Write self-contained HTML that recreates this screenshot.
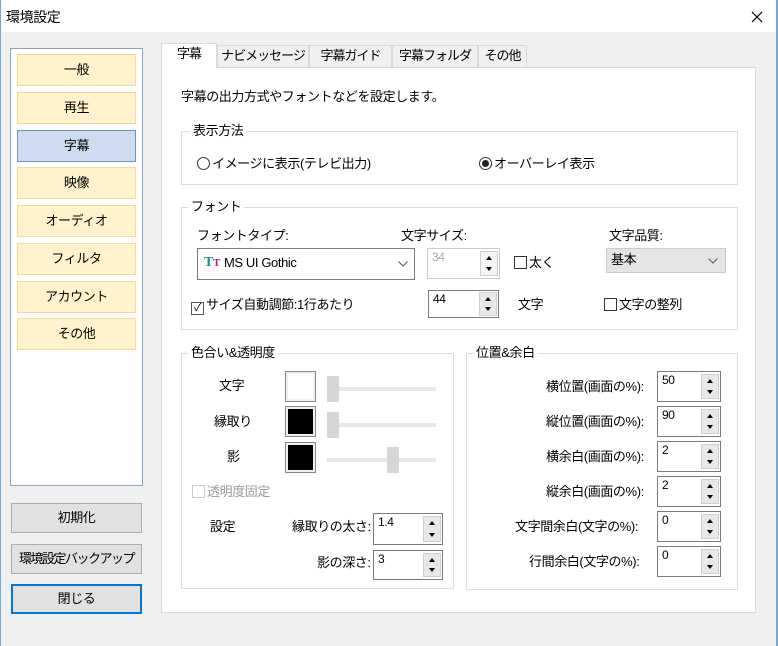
<!DOCTYPE html>
<html><head><meta charset="utf-8">
<style>
*{box-sizing:border-box;margin:0;padding:0}
body{width:778px;height:646px;background:#f0f0f0;font-family:"Liberation Sans","Noto Sans CJK JP",sans-serif;font-size:13px;color:#000;position:relative;overflow:hidden;letter-spacing:-0.4px}
.a{position:absolute}
.t{position:absolute;white-space:nowrap;line-height:16px}
.nav{position:absolute;left:17px;width:119px;height:32px;background:#fff2cc;border:1px solid #f3d99b;text-align:center;line-height:30px;white-space:nowrap}
.btn{position:absolute;left:11px;width:131px;height:30px;background:#e1e1e1;border:1px solid #adadad;text-align:center;line-height:28px;white-space:nowrap;overflow:hidden}
.tab{position:absolute;top:45px;height:22px;border:1px solid #d9d9d9;border-bottom:none;background:#f0f0f0;text-align:center;line-height:20px;white-space:nowrap;overflow:hidden;letter-spacing:-1px}
.grp{position:absolute;border:1px solid #dcdcdc}
.gl{position:absolute;top:-9px;left:8px;background:#fff;padding:0 3px;line-height:16px;white-space:nowrap}
.spin{position:absolute;background:#fff;border:1px solid #7a7a7a}
.spin .v{position:absolute;left:4px;top:1px;line-height:14px;font-size:12px}
.sb{position:absolute;right:1px;width:18px;background:#e8e8e8;border:1px solid #cfcfcf}
.sb:before{content:"";position:absolute;left:5px;top:4px;border:3px solid transparent;border-bottom:4px solid #000;border-top:0}
.sb:after{content:"";position:absolute;left:5px;bottom:4px;border:3px solid transparent;border-top:4px solid #000;border-bottom:0}
.sw{position:absolute;left:285px;width:31px;height:31px;border:1px solid #888;box-shadow:inset 0 0 0 2px #f0f0f0}
.trk{position:absolute;left:327px;width:109px;height:4px;background:#e7e7e7}
.thumb{position:absolute;width:12px;height:26px;background:#d6d6d6}
.cb{display:inline-block;width:13px;height:13px;border:1px solid #333;vertical-align:-2px;margin-right:2px;background:#fff;font-size:11px;line-height:11px;text-align:center}
.rd{display:inline-block;width:13px;height:13px;border:1px solid #333;border-radius:50%;vertical-align:-2px;margin-right:2px;background:#fff;position:relative}
.rd i{position:absolute;left:2px;top:2px;width:7px;height:7px;border-radius:50%;background:#222}
</style></head><body>
<div class="a" style="left:0;top:0;width:778px;height:32px;background:#fff"></div>
<div class="a" style="left:0;top:0;width:1px;height:646px;background:#6fa9dc"></div>
<div class="a" style="right:0;top:0;width:2px;height:646px;background:#6fa9dc"></div>
<div class="t" style="left:6px;top:9px;font-size:14px">環境設定</div>
<svg class="a" style="left:751px;top:11px" width="12" height="12"><path d="M1 1L11 11M11 1L1 11" stroke="#000" stroke-width="1.2"/></svg>

<div class="a" style="left:10px;top:48px;width:133px;height:438px;background:#fff;border:1px solid #8aa4c8"></div>
<div class="nav" style="top:54px">一般</div>
<div class="nav" style="top:92px">再生</div>
<div class="nav" style="top:130px;background:#cddcf0;border:1px solid #6f94cc">字幕</div>
<div class="nav" style="top:167px">映像</div>
<div class="nav" style="top:205px">オーディオ</div>
<div class="nav" style="top:243px">フィルタ</div>
<div class="nav" style="top:281px">アカウント</div>
<div class="nav" style="top:318px">その他</div>

<div class="btn" style="top:503px">初期化</div>
<div class="btn" style="top:544px;letter-spacing:-1.5px">環境設定バックアップ</div>
<div class="btn" style="top:584px;border:2px solid #0078d7;line-height:26px">閉じる</div>

<div class="a" style="left:161px;top:67px;width:595px;height:546px;background:#fff;border:1px solid #d9d9d9"></div>
<div class="tab" style="left:217px;width:92px">ナビメッセージ</div>
<div class="tab" style="left:309px;width:83px">字幕ガイド</div>
<div class="tab" style="left:392px;width:86px">字幕フォルダ</div>
<div class="tab" style="left:478px;width:49px">その他</div>
<div class="tab" style="left:161px;top:43px;width:56px;height:25px;background:#fff">字幕</div>

<div class="t" style="left:181px;top:89px">字幕の出力方式やフォントなどを設定します。</div>

<div class="grp" style="left:181px;top:131px;width:557px;height:54px"><div class="gl">表示方法</div></div>
<div class="t" style="left:197px;top:156px"><span class="rd"></span>イメージに表示(テレビ出力)</div>
<div class="t" style="left:479px;top:156px"><span class="rd"><i></i></span>オーバーレイ表示</div>

<div class="grp" style="left:181px;top:207px;width:557px;height:123px"><div class="gl" style="left:6px">フォント</div></div>
<div class="t" style="left:197px;top:228px">フォントタイプ:</div>
<div class="t" style="left:401px;top:228px">文字サイズ:</div>
<div class="t" style="left:609px;top:228px">文字品質:</div>
<div class="a" style="left:197px;top:248px;width:218px;height:32px;background:#fff;border:1px solid #7a7a7a"></div>
<div class="t" style="left:204px;top:255px;font-family:'Liberation Serif',serif;font-weight:bold;color:#1b8a8a;font-size:14px">T<span style="color:#a0228c;font-size:11px">T</span></div>
<div class="t" style="left:224px;top:255px">MS UI Gothic</div>
<svg class="a" style="left:398px;top:261px" width="10" height="6"><path d="M0.5 0.5L5 5L9.5 0.5" stroke="#555" fill="none"/></svg>
<div class="spin" style="left:427px;top:248px;width:73px;height:31px;border-color:#ccc"><div class="v" style="color:#aaa">34</div><div class="sb" style="top:2px;height:25px;background:#f4f4f4"></div></div>
<div class="t" style="left:514px;top:255px"><span class="cb"></span>太く</div>
<div class="a" style="left:606px;top:248px;width:120px;height:25px;background:#e5e5e5;border:1px solid #ccc"></div>
<div class="t" style="left:611px;top:252px">基本</div>
<svg class="a" style="left:708px;top:258px" width="10" height="6"><path d="M0.5 0.5L5 5L9.5 0.5" stroke="#555" fill="none"/></svg>
<div class="t" style="left:191px;top:297px"><span class="cb" style="border-color:#555">✓</span>サイズ自動調節:1行あたり</div>
<div class="spin" style="left:428px;top:290px;width:71px;height:28px"><div class="v">44</div><div class="sb" style="top:1px;height:24px"></div></div>
<div class="t" style="left:518px;top:297px">文字</div>
<div class="t" style="left:604px;top:297px"><span class="cb"></span>文字の整列</div>

<div class="grp" style="left:181px;top:353px;width:273px;height:236px"><div class="gl" style="left:6px">色合い&amp;透明度</div></div>
<div class="t" style="left:219px;top:378px">文字</div>
<div class="t" style="left:214px;top:414px">縁取り</div>
<div class="t" style="left:227px;top:449px">影</div>
<div class="sw" style="top:371px;background:#fff"></div>
<div class="sw" style="top:406px;background:#000"></div>
<div class="sw" style="top:442px;background:#000"></div>
<div class="trk" style="top:387px"></div><div class="thumb" style="left:327px;top:376px"></div>
<div class="trk" style="top:423px"></div><div class="thumb" style="left:327px;top:412px"></div>
<div class="trk" style="top:458px"></div><div class="thumb" style="left:387px;top:447px"></div>
<div class="t" style="left:192px;top:484px;color:#999"><span class="cb" style="border-color:#ccc"></span>透明度固定</div>
<div class="t" style="left:210px;top:519px">設定</div>
<div class="t" style="left:292px;top:519px">縁取りの太さ:</div>
<div class="t" style="left:317px;top:555px">影の深さ:</div>
<div class="spin" style="left:373px;top:513px;width:70px;height:32px"><div class="v">1.4</div><div class="sb" style="top:2px;height:26px"></div></div>
<div class="spin" style="left:373px;top:550px;width:70px;height:30px"><div class="v">3</div><div class="sb" style="top:2px;height:24px"></div></div>

<div class="grp" style="left:466px;top:353px;width:272px;height:237px"><div class="gl" style="left:6px">位置&amp;余白</div></div>
<div class="t" style="left:546px;top:379px">横位置(画面の%):</div>
<div class="t" style="left:546px;top:414px">縦位置(画面の%):</div>
<div class="t" style="left:546px;top:449px">横余白(画面の%):</div>
<div class="t" style="left:546px;top:484px">縦余白(画面の%):</div>
<div class="t" style="left:515px;top:519px">文字間余白(文字の%):</div>
<div class="t" style="left:529px;top:554px">行間余白(文字の%):</div>
<div class="spin" style="left:657px;top:371px;width:64px;height:31px"><div class="v">50</div><div class="sb" style="top:2px;height:25px"></div></div>
<div class="spin" style="left:657px;top:406px;width:64px;height:31px"><div class="v">90</div><div class="sb" style="top:2px;height:25px"></div></div>
<div class="spin" style="left:657px;top:441px;width:64px;height:31px"><div class="v">2</div><div class="sb" style="top:2px;height:25px"></div></div>
<div class="spin" style="left:657px;top:476px;width:64px;height:31px"><div class="v">2</div><div class="sb" style="top:2px;height:25px"></div></div>
<div class="spin" style="left:657px;top:511px;width:64px;height:31px"><div class="v">0</div><div class="sb" style="top:2px;height:25px"></div></div>
<div class="spin" style="left:657px;top:546px;width:64px;height:31px"><div class="v">0</div><div class="sb" style="top:2px;height:25px"></div></div>
</body></html>
